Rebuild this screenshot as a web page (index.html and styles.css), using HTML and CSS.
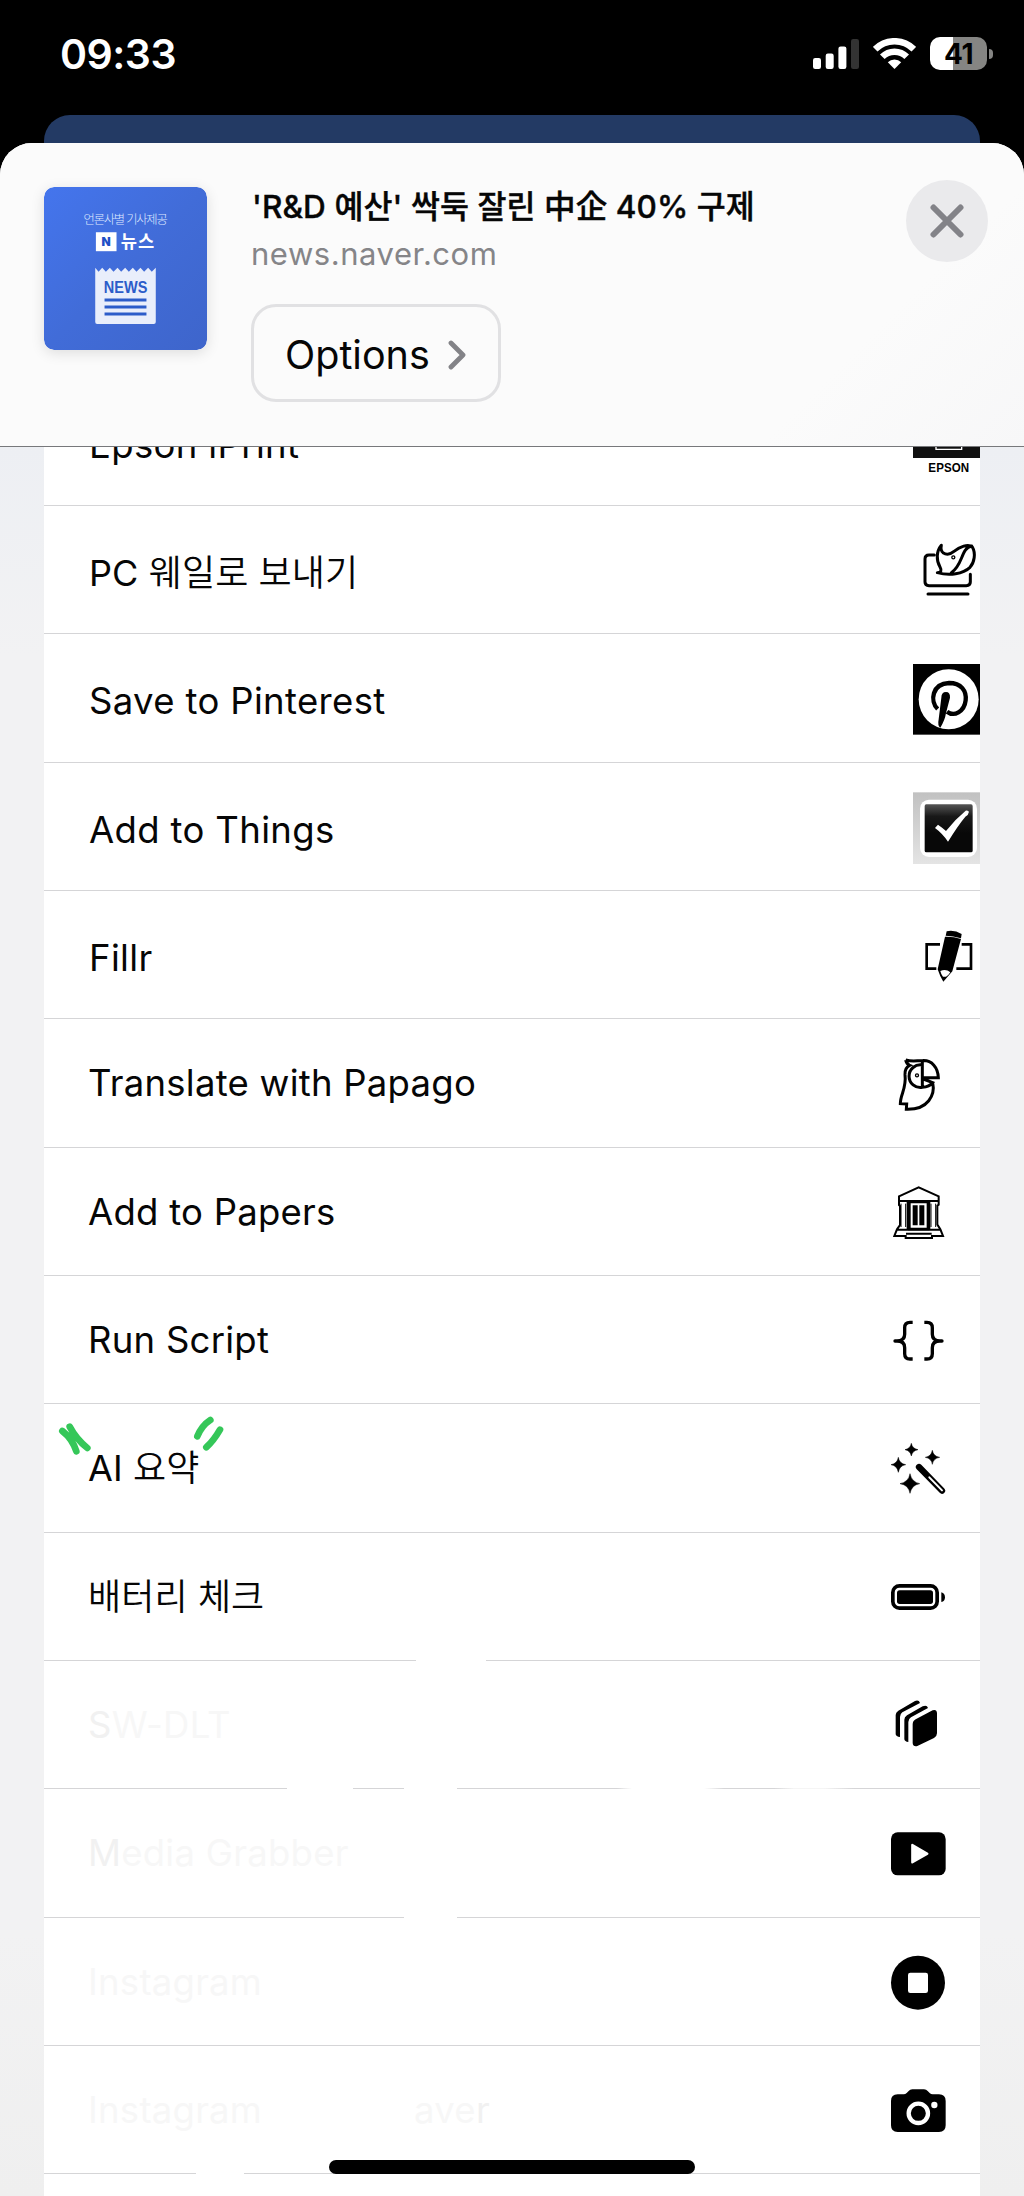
FILE: index.html
```html
<!DOCTYPE html>
<html lang="ko">
<head>
<meta charset="utf-8">
<title>Share</title>
<link rel="stylesheet" href="styles.css">
</head>
<body>
<div class="screen">
  <header class="status">
    <span class="time">09:33</span>
    <div class="indicators">
      <svg class="signal" width="46" height="30" viewBox="0 0 46 30" fill="#fff"><rect y="19" width="8" height="11" rx="2.2"/><rect x="12.7" y="14.5" width="8" height="15.5" rx="2.2"/><rect x="25.4" y="7.5" width="8" height="22.5" rx="2.2"/><rect x="38" width="8" height="30" rx="2.2" fill="#333"/></svg>
      <svg class="wifi" width="43" height="31" viewBox="0 0 43 31" fill="none" stroke="#fff" stroke-width="6.5"><path d="M2.2 11.2a27.3 27.3 0 0 1 38.6 0"/><path d="M9.3 18.8a17.2 17.2 0 0 1 24.4 0"/><path d="M14.8 24.2a9.5 9.5 0 0 1 13.4 0L21.5 31z" fill="#fff" stroke="none"/></svg>
      <div class="battery"><span>41</span></div>
    </div>
  </header>
  <div class="behind"></div>
  <section class="sheet">
    <div class="head">
      <svg class="thumb" viewBox="132 110 490 490">
        <defs><linearGradient id="blue" x1="0" y1="0" x2="1" y2="1"><stop offset="0" stop-color="#4475ed"/><stop offset=".5" stop-color="#416cd8"/><stop offset="1" stop-color="#3e65cb"/></linearGradient></defs>
        <rect x="132" y="110" width="490" height="490" rx="30" fill="url(#blue)"/>
        <text x="251" y="222" class="thumb-note" textLength="253">언론사별 기사제공</text>
        <rect x="288" y="246" width="62" height="57" fill="#fff"/>
        <text x="305" y="288" class="thumb-n">N</text>
        <text x="363" y="294" class="thumb-title" textLength="100">뉴스</text>
        <path d="M286 353l10 12 11-12 11 12 12-12 11 12 12-12 11 12 12-12 11 12 12-12 11 12 12-12 11 12 12-12 11 12 12-12V516q0 6-6 6H292q-6 0-6-6z" fill="#e9eefb"/>
        <text x="312" y="429" class="thumb-news" textLength="131" lengthAdjust="spacingAndGlyphs">NEWS</text>
        <path d="M314 450h126M314 471h126M314 492h126" stroke="#2c5cc9" stroke-width="9"/>
      </svg>
      <div class="info">
        <h1>'R&amp;D 예산' 싹둑 잘린 中企 40% 구제</h1>
        <p>news.naver.com</p>
        <button class="options"><span>Options</span><svg width="18" height="30" viewBox="0 0 18 30"><path d="M3 3l12 12L3 27" fill="none" stroke="#838387" stroke-width="4.8" stroke-linecap="round" stroke-linejoin="round"/></svg></button>
      </div>
      <button class="close"><svg width="34" height="34" viewBox="0 0 34 34"><path d="M3.5 3.5l27 27M30.5 3.5l-27 27" stroke="#838388" stroke-width="6" stroke-linecap="round"/></svg></button>
    </div>
    <div class="body">
      <ul class="list">
        <li class="row app"><span>Epson iPrint</span>
          <svg class="icon" viewBox="0 -187 300 385"><rect x="99" y="-160" width="201" height="213" fill="#101010"/><path d="M168-20h77v47h-77z" fill="none" stroke="#fff" stroke-width="4"/><text x="145" y="96" class="epson" textLength="123" lengthAdjust="spacingAndGlyphs">EPSON</text></svg></li>
        <li class="row app korean"><span>PC <span class="ko">웨일로 보내기</span></span>
          <svg class="icon line" viewBox="0 198 300 385"><path d="M163 345h-16q-12 0-12 12v69q0 11 12 11h112q12 0 12-11v-23M144 462h120"/><path d="M184 316c-15 18-16 45-4 65q9 16-8 17c37 10 77 4 98-16 13-14 18-42 7-61-13-11-38 0-55 13-12 10-23 11-33 4q-8-6-5-22zM275 318c-33 6-25 57-61 80"/><circle cx="220" cy="352" r="2"/></svg></li>
        <li class="row app"><span>Save to Pinterest</span>
          <svg class="icon" viewBox="0 583 300 385"><rect x="99" y="673" width="201" height="212"/><circle cx="206" cy="779" r="90" fill="#fff"/><path d="M173 808c-24-24-17-76 34-78 37 0 53 24 50 52-4 35-35 50-56 34" fill="none" stroke="#000" stroke-width="13"/><path d="M184 774q0-17 14-17 13 0 12 17l-12 46q-3 21-17 44-9-5-5-25z"/></svg></li>
        <li class="row app"><span>Add to Things</span>
          <svg class="icon" viewBox="0 69 300 385"><defs><linearGradient id="gray" x2="0" y2="1"><stop stop-color="#c1c1c1"/><stop offset="1" stop-color="#e4e4e4"/></linearGradient><linearGradient id="dark" x2="0" y2="1"><stop stop-color="#555"/><stop offset=".25" stop-color="#181818"/><stop offset=".6" stop-color="#080808"/></linearGradient></defs><rect x="99" y="157" width="201" height="215" fill="url(#gray)"/><rect x="120" y="179" width="171" height="172" rx="27" fill="#fff"/><rect x="134" y="193" width="144" height="144" rx="5" fill="url(#dark)"/><path d="M165 264l9-10q13 9 24 19 26-34 59-61 5-1 10 3-2 11-11 15-23 28-52 75-17-25-39-41z" fill="#fff"/></svg></li>
        <li class="row app"><span>Fillr</span>
          <svg class="icon" viewBox="0 454 300 385"><path d="M180 614h-40v73h29M245 614h28v73h-44" fill="none" stroke="#000" stroke-width="8"/><path d="M200 575q23-5 45 8l-2 13q-24-8-46-8zM195 591q25-1 48 7l-26 97-27 31q-10-15-17-37z"/><path d="M181 694q17-7 30 4-6 10-13 13h-9q-6-7-8-17z" fill="#fff"/></svg></li>
        <li class="row"><span>Translate with Papago</span>
          <svg class="icon line papago" viewBox="60 28 300 385"><path d="M137 151c22 6 36 1 50 2 29-2 47 21 48 51h-45M187 153v79M187 166a34 34 0 1 0 0 67c14-1 25-6 31-14l-28-11M137 151q2 12 12 16-15 7-14 28c5 42-14 58-14 87l19 1-1 16c66 2 87-44 79-80"/><circle cx="171" cy="197" r="2"/></svg></li>
        <li class="row"><span>Add to Papers</span>
          <svg class="icon" viewBox="60 413 300 385"><path d="M117 572v-14l59-27 60 27v25l-4 3v57l9 14 8 20h-33v6h-79v-6h-34l8-20 9-13v-57l-3-3zM118 572h116M143 575v81M208 575v81M109 658h133M138 670h77" fill="none" stroke="#000" stroke-width="6"/><path d="M123 580v70M137 580v70M213 580v70M227 580v70" stroke="#000" stroke-width="3"/><path d="M148 575h56v81h-56z" fill="none" stroke="#000" stroke-width="8"/><path d="M158 585h15v60h-15zM178 585h15v60h-15z"/></svg></li>
        <li class="row"><span>Run Script</span>
          <svg class="icon line braces" viewBox="60 -12 300 385"><path d="M158 127h-8q-16 0-16 16v20q0 20-23 20h-6 6q23 0 23 20v18q0 16 16 16h8M193 127h8q16 0 16 16v20q0 20 23 20h6-6q-23 0-23 20v18q0 16-16 16h-8"/></svg></li>
        <li class="row korean"><span>AI <span class="ko">요약</span></span>
          <svg class="marks" viewBox="42 72 600 385"><path d="M97 153q30 23 42 61M119 140q20 38 53 64M541 120q-26 17-39 49M570 149q-19 33-41 53"/></svg>
          <svg class="icon" viewBox="60 373 300 385"><path d="M154 491q3 16 20 19-17 3-20 19-3-16-19-19 16-3 19-19zM217 512q3 18 22 21-19 3-22 21-3-18-21-21 18-3 21-21zM115 533q3 19 22 22-19 3-22 23-3-20-22-23 19-3 22-22zM150 582q5 25 29 30-24 4-29 29-4-25-30-29 26-5 30-30z" stroke="#000" stroke-width="1.5"/><path d="M177 562l69 71" stroke="#000" stroke-width="19" stroke-linecap="round"/><path d="M208 593l38 39" stroke="#fff" stroke-width="6" stroke-linecap="round"/></svg></li>
        <li class="row korean gap-a"><span class="ko">배터리 체크</span>
          <svg class="icon" viewBox="60 759 300 385"><rect x="98.500" y="917.500" width="133" height="67" rx="20" fill="none" stroke="#000" stroke-width="11"/><rect x="111" y="931" width="108" height="41" rx="8"/><path d="M244 937q11 3 11 15t-11 14z"/></svg></li>
        <li class="row faint gap-b"><span><b>S</b>W-DLT</span>
          <svg class="icon" viewBox="60 3 300 385"><path d="M158 193q0-10 9-15l51-27q12-4 13 8v61q0 9-9 14l-50 24q-13 3-14-9zM133 179q0-8 8-13l47-27q13-5 16 5l-51 28q-8 5-8 14v60q-11-1-12-8zM107 165q0-8 8-13l50-29q12-4 15 6l-53 28q-7 5-7 14v60q-12-1-13-8z"/></svg></li>
        <li class="row faint gap-c"><span><b>M</b>edia Grabber</span>
          <svg class="icon" viewBox="60 388 300 385"><rect x="93" y="518" width="164" height="129" rx="20"/><path d="M157 556l45 26-45 26z" fill="#fff" stroke="#fff" stroke-width="7" stroke-linejoin="round"/></svg></li>
        <li class="row faint"><span>Instagram</span>
          <svg class="icon" viewBox="60 773 300 385"><circle cx="174" cy="967" r="81"/><rect x="144" y="937" width="60" height="61" rx="7" fill="#fff"/></svg></li>
        <li class="row faint gap-d"><span>Instagram</span><span class="tail">ave<b>r</b></span>
          <svg class="icon" viewBox="60 1158 300 385"><path d="M93 1323q0-20 20-20h18q5 0 9-4l6-6q4-5 11-5h35q7 0 11 5l6 6q4 4 9 4h19q20 0 20 20v73q0 20-20 20H113q-20 0-20-20z"/><circle cx="175" cy="1360" r="29" fill="none" stroke="#fff" stroke-width="13"/><circle cx="223" cy="1335" r="9.500" fill="#fff"/></svg></li>
        <li class="row"></li>
      </ul>
    </div>
  </section>
  <div class="home"></div>
</div>
</body>
</html>
```
FILE: styles.css
```css
* { box-sizing: border-box; }
body { margin: 0; background: #000; font-family: Inter, "Noto Sans CJK KR", sans-serif; color: #060606; }
.screen { position: relative; width: 1024px; height: 2196px; overflow: hidden; display: flex; flex-direction: column; background: #000; }

.status { height: 115px; padding: 37px 31px 0 60px; display: flex; justify-content: space-between; align-items: flex-start; }
.time { color: #fff; font-size: 41px; line-height: 34px; font-weight: 600; letter-spacing: -0.5px; }
.indicators { display: flex; align-items: center; height: 33px; }
.wifi { margin-left: 14px; }
.battery { position: relative; width: 57px; height: 33px; margin: 0 6px 0 14px; border-radius: 10px; background: linear-gradient(90deg, #fff 41%, #858583 41%); text-align: center; }
.battery span { color: #000; font-size: 28px; line-height: 34px; font-weight: 700; letter-spacing: -0.5px; }
.battery::after { content: ""; position: absolute; left: 59px; top: 12px; width: 4px; height: 10px; border-radius: 0 4px 4px 0; background: #858583; }

.behind { height: 28px; margin: 0 44px; border-radius: 26px 26px 0 0; background: #233a64; }
.sheet { flex: 1; display: flex; flex-direction: column; border-radius: 32px 32px 0 0; background: #fbfbfb; overflow: hidden; }
.head { height: 304px; flex: none; display: flex; align-items: flex-start; padding: 0 36px 0 44px; border-bottom: 1px solid #77787b; background: linear-gradient(135deg, #fbfbfb 80%, #f7f7f8); }
.thumb { width: 163px; height: 163px; margin-top: 44px; border-radius: 10px; box-shadow: 0 3px 14px rgba(0, 0, 0, .12); flex: none; }
.thumb-note { font-size: 37px; font-weight: 300; fill: #dfe8ff; }
.thumb-n { font-size: 36px; font-weight: 900; fill: #1f50c5; }
.thumb-title { font-size: 53px; font-weight: 700; fill: #fff; }
.thumb-news { font-family: "Liberation Sans", sans-serif; font-size: 49px; font-weight: 700; fill: #2c5cc9; }
.info { flex: 1; margin-left: 44px; padding-top: 44px; }
h1 { margin: 0; padding-left: 1px; font-size: 31.5px; line-height: 40px; font-weight: 500; letter-spacing: .08px; -webkit-text-stroke: .4px #060606; white-space: nowrap; }
p { margin: 7px 0 0; font-size: 31px; line-height: 40px; letter-spacing: .55px; color: #858588; }
button { border: 0; padding: 0; font: inherit; color: inherit; background: none; }
.options { display: flex; align-items: center; width: 250px; height: 98px; margin-top: 30px; padding: 4px 0 0 31px; border: 3px solid #e1e1e3; border-radius: 25px; font-size: 39.5px; }
.options svg { margin-left: 18px; }
.close { width: 82px; height: 82px; margin-top: 37px; display: flex; align-items: center; justify-content: center; border-radius: 50%; background: #eaeaec; }

.body { flex: 1; min-height: 0; overflow: hidden; padding: 0 44px; background: linear-gradient(#edeff3, #f2f2f3 12%, #f2f2f3 85%, #efefef); }
.list { list-style: none; margin: -69.33px 0 0; padding: 0; background: #fff; }
.row { position: relative; display: flex; align-items: flex-start; height: 128.333px; padding-left: 44px; border-bottom: 1px solid #d5d5d7; font-size: 36.5px; line-height: 128px; letter-spacing: .25px; white-space: pre; }
.app { padding-left: 45px; letter-spacing: .35px; }
.app > span { padding-top: 3px; }
.korean { font-size: 36px; letter-spacing: .1px; }
.ko { font-weight: 350; }
.icon { width: 100px; height: 128.333px; margin-left: auto; flex: none; }
.line { fill: none; stroke: #000; stroke-width: 9px; stroke-linecap: round; stroke-linejoin: round; }
.papago { stroke-width: 9px; stroke-linecap: butt; stroke-linejoin: miter; }
.braces { stroke-width: 10px; stroke-linecap: butt; }
.epson { font-family: "Liberation Sans", sans-serif; font-weight: 700; font-size: 37px; }
.marks { position: absolute; left: 0; top: 0; width: 200px; height: 128.333px; fill: none; stroke: #35c759; stroke-width: 20px; stroke-linecap: round; }

.faint { color: #f7f7f7; }
.faint b { font-weight: 400; color: #f1f1f1; }
.tail { margin-left: 152px; }
.gap-a::after, .gap-b::before, .gap-b::after, .gap-c::after, .gap-d::after { content: ""; position: absolute; bottom: -1px; height: 1px; background: #fff; }
.gap-a::after { left: 372px; width: 70px; }
.gap-b::before { left: 243px; width: 66px; }
.gap-b::after { left: 360px; width: 460px; background: linear-gradient(90deg, #fff 53px, #d5d5d7 53px, #d5d5d7 213px, #fff 228px, #fff 300px, #d5d5d7 320px, #d5d5d7 370px, #f5f5f5 390px, #f5f5f5 420px, #d5d5d7 450px); }
.gap-c::after { left: 360px; width: 53px; }
.gap-d::after { left: 152px; width: 48px; }

.home { position: absolute; left: 329px; top: 2160px; width: 366px; height: 14px; border-radius: 7px; background: #000; }
```
